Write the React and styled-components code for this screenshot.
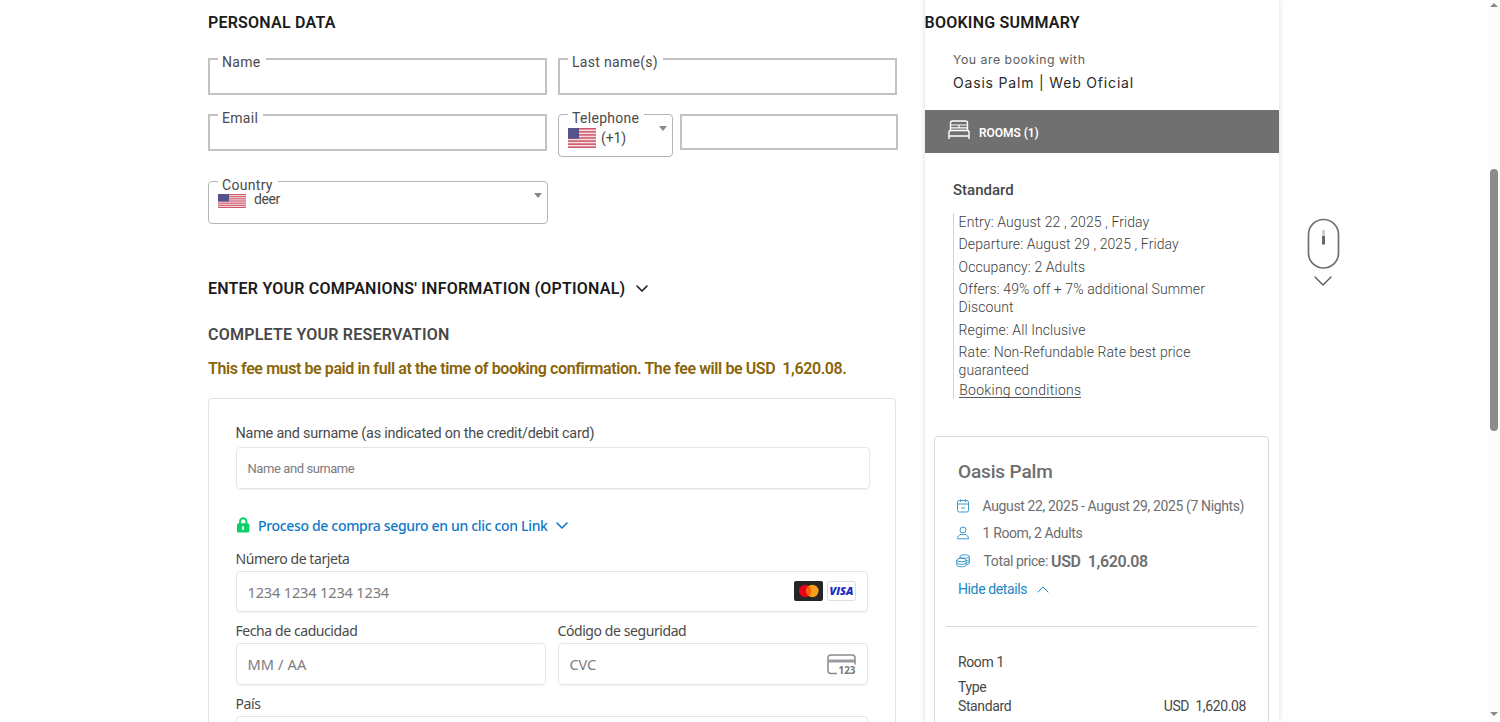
import React from 'react';
import styled, { createGlobalStyle } from 'styled-components';

const GlobalStyle = createGlobalStyle`
	* { box-sizing: border-box; }
	html, body {
		margin: 0;
		height: 722px;
		overflow: hidden;
		background: #fff;
	}
	body {
		font-family: Roboto, 'Liberation Sans', sans-serif;
		font-size: 14px;
		color: #4a4a4a;
	}
	svg { display: block; flex-shrink: 0; overflow: visible; }
`;

const Page = styled.div`
	display: flex;
	width: 1500px;
	height: 722px;
	overflow: hidden;
	padding-left: 208px;
`;

const Main = styled.main`
	width: 690px;
	margin-right: 26.6px;
	flex-shrink: 0;
`;

const Heading = styled.h2`
	display: flex;
	align-items: center;
	gap: 11px;
	margin: 0;
	height: ${(p) => p.$height || 44}px;
	font-size: 16px;
	font-weight: 600;
	letter-spacing: 0.22px;
	color: ${(p) => p.$color || '#1b1b1b'};
	white-space: nowrap;
`;

/* contact form */

const ContactForm = styled.div`
	padding-top: 14px;
	height: 222px;
`;

const FieldRow = styled.div`
	display: flex;
	align-items: flex-start;
	gap: ${(p) => p.$gap || 11}px;
	height: ${(p) => p.$height || 56}px;
`;

const Field = styled.div`
	position: relative;
	width: ${(p) => p.$width || 339}px;
	height: ${(p) => p.$height || 37}px;
	border: 2px solid #c2c2c2;
`;

const SelectField = styled(Field)`
	height: 43px;
	border: 1px solid #b4b4b4;
	border-radius: 4px;
	display: flex;
	align-items: flex-start;
	padding: ${(p) => p.$pad};
	gap: ${(p) => p.$space}px;
	line-height: 16px;
`;

const SelectValue = styled.span`
	margin-top: ${(p) => p.$top}px;
	letter-spacing: ${(p) => p.$spacing}px;
`;

const FloatingLabel = styled.label`
	position: absolute;
	top: ${(p) => (p.$thin ? -5 : -6)}px;
	left: ${(p) => (p.$thin ? 9 : 8)}px;
	padding: 0 5px 0 4px;
	background: #fff;
	line-height: 16px;
	letter-spacing: 0.3px;
	white-space: nowrap;
`;

const Caret = styled.span`
	margin-left: auto;
	margin-top: ${(p) => p.$top}px;
	border: 4px solid transparent;
	border-top: 5px solid #888;
	border-bottom: 0;
`;

const Notice = styled.p`
	margin: 0;
	height: 40px;
	line-height: 21px;
	font-size: 16px;
	font-weight: 600;
	color: #8a6508;
	white-space: pre;
	letter-spacing: -0.41px;
`;

/* payment */

const PaymentCard = styled.section`
	width: 688px;
	height: 340px;
	border: 1px solid #e2e2e2;
	border-radius: 4px;
	padding: 26px 0 0 27px;
`;

const Label = styled.label`
	display: block;
	margin-left: -0.5px;
	line-height: 18px;
	height: ${(p) => p.$height || 22}px;
	color: #4a4a4a;
	font-family: ${(p) => (p.$stripe ? "'Noto Sans', 'Open Sans', sans-serif" : 'inherit')};
	font-size: ${(p) => (p.$stripe ? 14 : 14.4)}px;
	letter-spacing: ${(p) => (p.$stripe ? -0.42 : -0.2)}px;
	white-space: nowrap;
`;

const Input = styled.div`
	display: flex;
	align-items: center;
	justify-content: space-between;
	width: ${(p) => p.$width || 632}px;
	height: ${(p) => p.$height || 42}px;
	padding: 0 11px;
	border: 1px solid #e6e6e6;
	border-radius: 4px;
	box-shadow: 0 1px 2px rgba(0, 0, 0, 0.06);
	color: #7c7c80;
	font-family: ${(p) => (p.$plain ? 'inherit' : "'Noto Sans', 'Open Sans', sans-serif")};
	font-size: ${(p) => (p.$plain ? 13 : 14.6)}px;
	letter-spacing: ${(p) => p.$spacing || -0.18}px;
	text-indent: -0.5px;
`;

const LinkRow = styled.div`
	display: flex;
	align-items: center;
	height: 24px;
	margin: 24px 0 13px;
	color: #0f78c8;
	font-family: 'Noto Sans', 'Open Sans', sans-serif;
	font-size: 14px;
	font-weight: 500;
	letter-spacing: -0.33px;
	white-space: nowrap;

	span { margin: 0 8px; }
`;

const Columns = styled.div`
	display: grid;
	grid-template-columns: 310px 310px;
	column-gap: 12px;
	margin: 10px 0 10px;
`;

const Brands = styled.div`
	display: flex;
	gap: 4px;
	margin-bottom: 1px;
`;

/* booking summary */

const Aside = styled.aside`
	width: 354px;
	height: 722px;
	flex-shrink: 0;
	box-shadow: 0 0 5px rgba(0, 0, 0, 0.16);
`;

const Site = styled.div`
	height: 66px;
	padding: 7px 0 0 28.4px;
	font-family: Inter, Roboto, sans-serif;
	white-space: nowrap;
`;

const SiteNote = styled.div`
	font-size: 12.3px;
	line-height: 17px;
	letter-spacing: 0.52px;
	color: #5c5c5c;
`;

const SiteName = styled.div`
	margin-top: 5px;
	font-size: 14px;
	line-height: 20px;
	letter-spacing: 0.82px;
	color: #2a2a2a;
`;

const RoomsBar = styled.div`
	display: flex;
	height: 43px;
	padding: 10px 0 0 23.4px;
	background: #707070;
	color: #fff;
	font-size: 12px;
	font-weight: 600;
	letter-spacing: -0.05px;

	span { margin: 6px 0 0 9px; line-height: 14px; }
`;

const RoomName = styled.div`
	padding: 27px 0 0 28.4px;
	height: 60px;
	line-height: 20px;
	font-size: 15px;
	font-weight: 500;
	color: #484848;
`;

const Conditions = styled.div`
	margin-left: 28px;
	width: 300px;
	height: 185px;
	padding-left: 5px;
	border-left: 1px solid #d5d5d5;
	font-size: 14px;
	font-weight: 300;
	letter-spacing: 0.09px;
	line-height: 18px;
	color: #3c3c3c;

	p { margin: 0 0 4.5px; }
	p:first-child { margin-top: -0.4px; }
`;

const ConditionsLink = styled.a`
	display: block;
	width: 122px;
	margin: -2px 0 0 0.6px;
	line-height: 16px;
	height: 16px;
	letter-spacing: 0.28px;
	white-space: nowrap;
	border-bottom: 1px solid #555;
`;

const Total = styled.section`
	margin: 38px 0 0 9.4px;
	width: 335px;
	height: 320px;
	border: 1px solid #d9d9d9;
	border-radius: 4px;
	padding: 22px 11px 0;
	color: #6e6e6e;
	font-size: 14px;
	letter-spacing: -0.38px;
`;

const Hotel = styled.h3`
	margin: 0 0 8px 12px;
	font-size: 19px;
	font-weight: 500;
	line-height: 26px;
	letter-spacing: -0.15px;
`;

const Fact = styled.div`
	display: flex;
	align-items: center;
	height: ${(p) => p.$height || 27}px;
	padding-left: 9.3px;
	white-space: pre;

	svg { width: 16px; margin-right: ${(p) => p.$gap || 11.3}px; }
	b { font-size: 16px; font-weight: 600; letter-spacing: -0.38px; }
`;

const Details = styled.div`
	display: flex;
	align-items: center;
	gap: 10px;
	height: 27px;
	padding-left: 12px;
	color: #2088c3;
`;

const Divider = styled.hr`
	margin: 23px 0 26px;
	border: 0;
	border-top: 1px solid #d9d9d9;
`;

const PriceLine = styled.div`
	display: flex;
	justify-content: space-between;
	padding: 0 11px 0 12px;
	line-height: 19px;
	margin-bottom: ${(p) => p.$bottom || 0}px;
	color: #484848;
	white-space: pre;
`;

const ScrollHint = styled.div`
	display: flex;
	flex-direction: column;
	align-items: center;
	margin: 218px 0 0 28px;
	width: 33px;
	gap: 6px;
`;

const Scrollbar = styled.div`
	display: flex;
	flex-direction: column;
	align-items: center;
	margin-left: auto;
	width: 13px;
	height: 722px;
	padding: 3px 2px 6px 3px;
	background: #fcfcfc;
`;

const Arrow = styled.i`
	border: 4px solid transparent;
	${(p) => (p.$up ? 'border-bottom: 4px solid #888; border-top: 0;' : 'border-top: 4px solid #888; border-bottom: 0; margin-top: auto;')}
`;

const Thumb = styled.div`
	width: 8px;
	height: 262px;
	margin-top: 162px;
	border-radius: 4px;
	background: #8b8b8b;
`;

const Flag = ({ height }) => (
	<svg width="28" height={height} viewBox="0 0 28 19" preserveAspectRatio="none">
		<rect width="28" height="19" fill="#f3dfe2" />
		{[0, 1, 2, 3, 4, 5, 6].map((i) => (
			<rect key={i} y={i * 2.92} width="28" height="1.46" fill="#d0586a" />
		))}
		<rect width="11" height="10.2" fill="#56528a" />
	</svg>
);

const Chevron = ({ width, height, stroke = 1, up, color = 'currentColor' }) => (
	<svg width={width} height={height} viewBox={`0 0 ${width} ${height}`} fill="none" stroke={color} strokeWidth={stroke} strokeLinecap="round" strokeLinejoin="round">
		<path d={up ? `M1 ${height - 1}L${width / 2} 1L${width - 1} ${height - 1}` : `M1 1L${width / 2} ${height - 1}L${width - 1} 1`} />
	</svg>
);

const BedIcon = () => (
	<svg width="22" height="20" viewBox="0 0 22 20" fill="none" stroke="#fff" strokeWidth="1.4">
		<path d="M2.500 10V3Q2.500 1 4.500 1H17.500Q19.500 1 19.500 3V10" />
		<path d="M2.500 5H19.500M2.500 7.800H19.500M11 5V7.800" strokeWidth="1.200" />
		<path d="M1 19V12Q1 10.500 3 10.500H19Q21 10.500 21 12V19M1 16H21" />
	</svg>
);

const LockIcon = () => (
	<svg width="14" height="16" viewBox="0 0 14 16">
		<path d="M4 7V4.500a3.200 3.200 0 0 1 6.400 0V7" fill="none" stroke="#0bd069" strokeWidth="1.900" />
		<rect x="1" y="6.300" width="12.300" height="9.200" rx="1.500" fill="#0bd069" />
		<path d="M7.100 9.800v2.400" stroke="#fff" strokeWidth="1.800" strokeLinecap="round" />
	</svg>
);

const Mastercard = () => (
	<svg width="29" height="20" viewBox="0 0 29 20">
		<rect width="29" height="20" rx="2" fill="#252525" />
		<circle cx="11.200" cy="10" r="6.200" fill="#eb001b" />
		<circle cx="18.400" cy="10" r="6.200" fill="#f79e1b" />
		<path d="M14.800 4.950a6.200 6.200 0 0 1 0 10.100a6.200 6.200 0 0 1 0-10.100" fill="#ff5f00" />
	</svg>
);

const Visa = () => (
	<svg width="29" height="20" viewBox="0 0 29 20">
		<rect x=".5" y=".5" width="28" height="19" rx="2" fill="#fff" stroke="#dcdce4" />
		<text x="2.500" y="14" textLength="24" lengthAdjust="spacingAndGlyphs" fontFamily="Open Sans, sans-serif" fontSize="11.200" fontWeight="800" fontStyle="italic" letterSpacing="0" fill="#1a2bc0">VISA</text>
	</svg>
);

const CvcIcon = () => (
	<svg width="29" height="21" viewBox="0 0 29 21">
		<path d="M10 19.500H4Q1 19.500 1 16.500V4Q1 1 4 1H25Q28 1 28 4V10.500" fill="none" stroke="#8a8a90" strokeWidth="1.500" />
		<rect x="1" y="5.500" width="27" height="3" fill="#9a9aa0" />
		<text x="11.500" y="20" textLength="17" lengthAdjust="spacingAndGlyphs" fontFamily="Open Sans, sans-serif" fontSize="10" fontWeight="700" letterSpacing="0" fill="#77777c">123</text>
	</svg>
);

const CalendarIcon = () => (
	<svg height="14" viewBox="0 0 16 14" fill="none" stroke="#3f98cc" strokeWidth="1">
		<rect x="2.500" y="1.500" width="11" height="11.500" rx="1.800" />
		<path d="M2.500 5h11M5.500 .5v2.500M10.500 .5v2.500M6 9h4" />
	</svg>
);

const PersonIcon = () => (
	<svg height="14" viewBox="0 0 16 14" fill="none" stroke="#3f98cc" strokeWidth="1">
		<circle cx="8" cy="4" r="3" />
		<path d="M2.500 12.800C2.300 10.300 4 9 6 8.300Q8 9.300 10 8.300C12 9 13.700 10.300 13.500 12.800Z" />
	</svg>
);

const CoinsIcon = () => (
	<svg height="14" viewBox="0 0 16 14" fill="none" stroke="#3f98cc" strokeWidth="1">
		<ellipse cx="6.500" cy="6" rx="4.700" ry="1.700" />
		<path d="M1.800 6v5c0 2.400 9.400 2.400 9.400 0V6M1.800 8.500c0 2.400 9.400 2.400 9.400 0" />
		<path d="M5 4V2.500C5 .3 14.300 .3 14.300 2.500V9c0 .9-1.300 1.500-3 1.700M5 2.700c0 1.700 9.300 2 9.300 0M11.300 6.700c1.700-.1 3-.6 3-1.400M11.300 8.800c1.700-.1 3-.6 3-1.400" />
	</svg>
);

const MouseIcon = () => (
	<svg width="33" height="52" viewBox="0 0 33 52">
		<rect x="1.500" y="1.500" width="30" height="48.500" rx="15" fill="none" stroke="#707070" strokeWidth="1.700" />
		<rect x="15" y="12" width="3" height="7" fill="#cfcfcf" />
		<rect x="15" y="18" width="3" height="8.500" fill="#686868" />
	</svg>
);

const conditions = [
	'Entry: August 22 , 2025 , Friday',
	'Departure: August 29 , 2025 , Friday',
	'Occupancy: 2 Adults',
	'Offers: 49% off + 7% additional Summer Discount',
	'Regime: All Inclusive',
	'Rate: Non-Refundable Rate best price guaranteed',
];

const TextField = ({ label, width, height }) => (
	<Field $width={width} $height={height}>{label && <FloatingLabel>{label}</FloatingLabel>}</Field>
);

const PersonalData = () => (
	<>
		<Heading>PERSONAL DATA</Heading>
		<ContactForm>
			<FieldRow>
				<TextField label="Name" />
				<TextField label="Last name(s)" />
			</FieldRow>
			<FieldRow $height={67}>
				<TextField label="Email" />
				<FieldRow $gap={7}>
					<SelectField $width={115} $pad="13px 5px 0 9px" $space={5}>
						<FloatingLabel $thin>Telephone</FloatingLabel>
						<Flag height={20} />
						<SelectValue $top={2} $spacing={-0.1}>(+1)</SelectValue>
						<Caret $top={-2} />
					</SelectField>
					<TextField width={218} height={36} />
				</FieldRow>
			</FieldRow>
			<SelectField $width={340} $pad="12px 5px 0 9px" $space={8}>
				<FloatingLabel $thin>Country</FloatingLabel>
				<Flag height={14} />
				<SelectValue $top={-3} $spacing={-0.4}>deer</SelectValue>
				<Caret $top={-1} />
			</SelectField>
		</ContactForm>
	</>
);

const Payment = () => (
	<PaymentCard>
		<Label>Name and surname (as indicated on the credit/debit card)</Label>
		<Input $plain $width={634} $spacing={-0.42}>Name and surname</Input>
		<LinkRow>
			<LockIcon />
			<span>Proceso de compra seguro en un clic con Link</span>
			<Chevron width={12} height={7} stroke={1.6} />
		</LinkRow>
		<Label $stripe $height={21}>Número de tarjeta</Label>
		<Input $height={41}>
			1234 1234 1234 1234
			<Brands>
				<Mastercard />
				<Visa />
			</Brands>
		</Input>
		<Columns>
			<div>
				<Label $stripe $height={21}>Fecha de caducidad</Label>
				<Input $width={310} $spacing={0.1}>MM / AA</Input>
			</div>
			<div>
				<Label $stripe $height={21}>Código de seguridad</Label>
				<Input $width={310}>
					CVC
					<CvcIcon />
				</Input>
			</div>
		</Columns>
		<Label $stripe $height={21}>País</Label>
		<Input />
	</PaymentCard>
);

const Summary = () => (
	<Aside>
		<Heading>BOOKING SUMMARY</Heading>
		<Site>
			<SiteNote>You are booking with</SiteNote>
			<SiteName>Oasis Palm | Web Oficial</SiteName>
		</Site>
		<RoomsBar>
			<BedIcon />
			<span>ROOMS (1)</span>
		</RoomsBar>
		<RoomName>Standard</RoomName>
		<Conditions>
			{conditions.map((text) => (
				<p key={text}>{text}</p>
			))}
			<ConditionsLink>Booking conditions</ConditionsLink>
		</Conditions>
		<Total>
			<Hotel>Oasis Palm</Hotel>
			<Fact>
				<CalendarIcon />
				August 22, 2025 - August 29, 2025 (7 Nights)
			</Fact>
			<Fact>
				<PersonIcon />
				1 Room, 2 Adults
			</Fact>
			<Fact $height={29} $gap={12.3}>
				<CoinsIcon />
				Total price: <b>USD  1,620.08</b>
			</Fact>
			<Details>
				Hide details
				<Chevron width={12} height={7} up />
			</Details>
			<Divider />
			<PriceLine $bottom={6}>Room 1</PriceLine>
			<PriceLine>Type</PriceLine>
			<PriceLine>
				<span>Standard</span>
				<span>USD  1,620.08</span>
			</PriceLine>
		</Total>
	</Aside>
);

export default function App() {
	return (
		<Page>
			<GlobalStyle />
			<Main>
				<PersonalData />
				<Heading>
					ENTER YOUR COMPANIONS' INFORMATION (OPTIONAL)
					<Chevron width={12} height={7} stroke={1.6} />
				</Heading>
				<Heading $height={48} $color="#484848">COMPLETE YOUR RESERVATION</Heading>
				<Notice>This fee must be paid in full at the time of booking confirmation. The fee will be USD  1,620.08.</Notice>
				<Payment />
			</Main>
			<Summary />
			<ScrollHint>
				<MouseIcon />
				<Chevron width={18} height={10} stroke={1.3} color="#555" />
			</ScrollHint>
			<Scrollbar>
				<Arrow $up />
				<Thumb />
				<Arrow />
			</Scrollbar>
		</Page>
	);
}
